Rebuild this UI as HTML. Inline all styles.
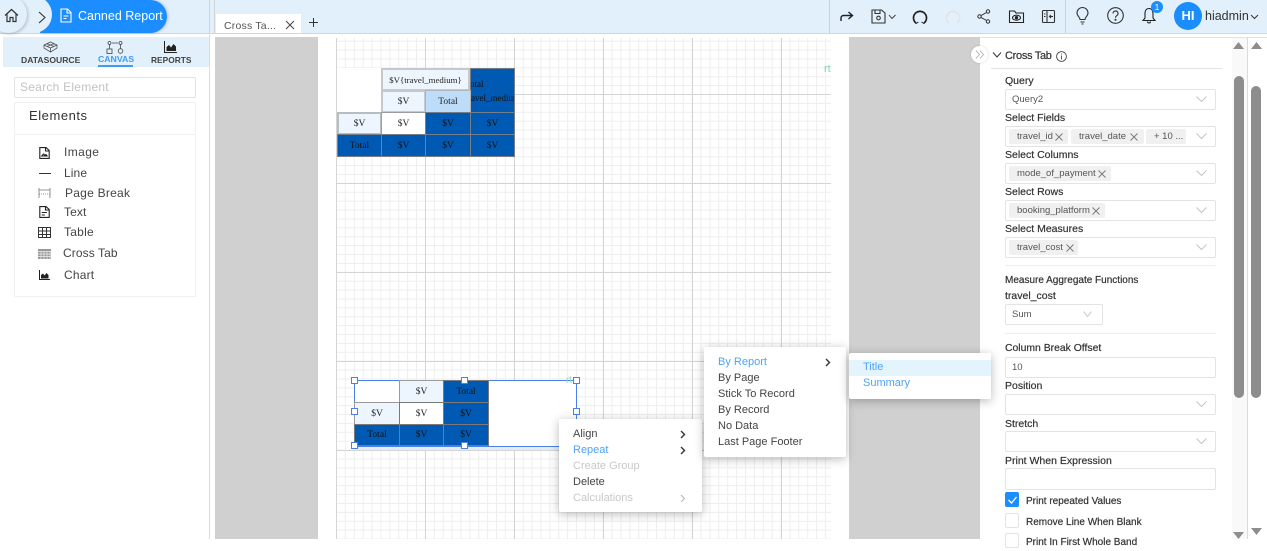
<!DOCTYPE html>
<html><head><meta charset="utf-8">
<style>
html,body{margin:0;padding:0;width:1267px;height:539px;overflow:hidden;background:#fff;font-family:"Liberation Sans",sans-serif;color:#333}
.a{position:absolute}
.t{position:absolute;white-space:nowrap;line-height:16px;font-size:11px;color:#3a3a3a}
.b{position:absolute;box-sizing:border-box;background:#fff;border:1px solid #e3e3e3;border-radius:2px}
.l{font-size:10.5px;color:#333;font-weight:400;-webkit-text-stroke:.2px #333;margin-top:1px}
.n{margin-top:1px}
.c{position:absolute;box-sizing:border-box;border:1px solid #8a8a8a;font-family:"Liberation Serif",serif;font-size:9.5px;color:#222;display:flex;align-items:center;justify-content:center;overflow:hidden;white-space:nowrap}
.d{background:#0059b2;color:#111}
.p{background:#edf6fe}
.chip{position:absolute;height:15px;background:#f0f0f0;border-radius:2px;font-size:9.5px;line-height:15px;color:#555;box-sizing:border-box;padding-left:8px;white-space:nowrap}
.m{position:absolute;background:#fff;box-shadow:0 2px 10px rgba(0,0,0,.28);border-radius:2px}
.h{position:absolute;width:5px;height:5px;background:#fff;border:1px solid #4a80e8}
svg{position:absolute;overflow:visible}
.blue{color:#3f9cf5}
.arrow{fill:none;stroke:#c4c4c4;stroke-width:1}
</style></head><body>

<!-- top bar -->
<div class="a" style="left:0;top:0;width:1267px;height:33px;background:#e1f0fa;border-bottom:1px solid #d0d6da"></div>
<div class="a" style="left:209px;top:0;width:6px;height:33px;background:#e1f0fa;border-left:1px solid #cfd6da;border-right:1px solid #cfd6da;box-sizing:border-box"></div>
<div class="a" style="left:40px;top:0;width:127px;height:33px;background:#1b8dff;border-radius:0 17px 17px 0;box-shadow:1px 0 3px rgba(0,0,0,.2)"></div>
<div class="a" style="left:16px;top:-4px;width:36px;height:37px;background:#e1f0fa;border-radius:0 20px 20px 0"></div>
<div class="a" style="left:-10px;top:-4px;width:37px;height:37px;background:#e1f0fa;border-radius:50%;box-shadow:1px 1px 3px rgba(0,0,0,.22)"></div>
<svg style="left:4px;top:8px" width="15" height="15" viewBox="0 0 15 15" fill="none" stroke="#333" stroke-width="1.2"><path d="M1 7.500 7.500 1.500 14 7.500M3 6v7.500h3V9.500h3v4h3V6"/></svg>
<svg style="left:38px;top:11px" width="9" height="13" viewBox="0 0 9 13" fill="none" stroke="#333" stroke-width="1.1"><path d="M1 1l6 5.500-6 5.500"/></svg>
<svg style="left:60px;top:8px" width="12" height="15" viewBox="0 0 12 15" fill="none" stroke="#fff" stroke-width="1.1"><path d="M1 1h6.500L11 4.500V14H1zM7 1v4h4M3.500 8h5M3.500 10.500h3"/></svg>
<div class="t" style="left:78px;top:8px;color:#fff;font-size:12.5px">Canned Report</div>

<div class="a" style="left:216px;top:14px;width:85px;height:19px;background:#fff"></div>
<div class="t" style="left:224px;top:18px;font-size:10.5px;color:#555;letter-spacing:.2px">Cross Ta...</div>
<svg style="left:285px;top:20px" width="10" height="10" viewBox="0 0 10 10" stroke="#444" stroke-width="1"><path d="M1 1l8 8M9 1l-8 8"/></svg>
<svg style="left:309px;top:18px" width="9" height="9" viewBox="0 0 9 9" stroke="#333" stroke-width="1"><path d="M4.500 0v9M0 4.500h9"/></svg>

<div class="a" style="left:829px;top:0;width:1px;height:33px;background:#c9d2d8"></div>
<div class="a" style="left:1065px;top:0;width:1px;height:33px;background:#c9d2d8"></div>
<svg style="left:840px;top:11px" width="14" height="11" viewBox="0 0 14 11" fill="none" stroke="#222" stroke-width="1.400"><path d="M1 10V7c0-1.500 1-2.500 2.500-2.500H12M8.500 1 12.500 4.500 8.500 8"/></svg>
<svg style="left:871px;top:9px" width="26" height="15" viewBox="0 0 26 15" fill="none" stroke="#333" stroke-width="1.100"><path d="M1 1h9.500L14 4v10H1zM4 1v3.500h5V1"/><circle cx="7.500" cy="9" r="1.800"/><path d="M18 6l3 3.500L24.500 6" stroke-width=".9"/></svg>
<svg style="left:912px;top:9px" width="16" height="16" viewBox="0 0 16 16" fill="none" stroke="#222" stroke-width="1.700"><path d="M4 14A6.500 6.500 0 1 1 12 14"/><path d="M2 12l2 2.500L6.500 13M14 12l-2 2.500L9.500 13" stroke-width="1"/></svg>
<svg style="left:945px;top:9px" width="16" height="16" viewBox="0 0 16 16" fill="none" stroke="#dfe5e8" stroke-width="1.700"><path d="M4 14A6.500 6.500 0 1 1 12 14"/></svg>
<svg style="left:977px;top:9px" width="14" height="15" viewBox="0 0 14 15" fill="none" stroke="#333" stroke-width="1"><circle cx="11" cy="2.500" r="1.700"/><circle cx="2.500" cy="7.500" r="1.700"/><circle cx="11" cy="12.500" r="1.700"/><path d="M4 6.600 9.500 3.500M4 8.400l5.500 3.100"/></svg>
<svg style="left:1009px;top:10px" width="15" height="13" viewBox="0 0 15 13" fill="none" stroke="#222" stroke-width="1.100"><path d="M.5 12.500V1h5l1.500 2h7.500v9.500z"/><ellipse cx="7.500" cy="7.700" rx="4" ry="2.500"/><circle cx="7.500" cy="7.700" r="1.100" fill="#222"/></svg>
<svg style="left:1042px;top:10px" width="13" height="13" viewBox="0 0 13 13" fill="none" stroke="#333" stroke-width="1.100"><rect x=".5" y=".5" width="12" height="12" rx="1"/><path d="M5 .5v12M2 4h1.500M2 6.500h1.500M11 6.500H7.500M9 5 7.500 6.500 9 8"/></svg>
<svg style="left:1076px;top:7px" width="13" height="18" viewBox="0 0 13 18" fill="none" stroke="#333" stroke-width="1.100"><path d="M4 12.500C4 10 1 9 1 6a5.500 5.500 0 0 1 11 0c0 3-3 4-3 6.500zM4.500 15h4M5.500 17h2"/></svg>
<svg style="left:1107px;top:7px" width="17" height="17" viewBox="0 0 17 17" fill="none" stroke="#333" stroke-width="1.100"><circle cx="8.500" cy="8.500" r="7.800"/><path d="M6 6.500a2.500 2.500 0 1 1 3.700 2.200c-.8.500-1.200 1-1.200 2"/><circle cx="8.500" cy="12.800" r=".5" fill="#333"/></svg>
<svg style="left:1142px;top:7px" width="14" height="17" viewBox="0 0 14 17" fill="none" stroke="#222" stroke-width="1.100"><path d="M7 1.500C4 1.500 3 4 3 6.500V11L1 13.500h12L11 11V6.500C11 4 10 1.500 7 1.500zM5.500 14.500c0 2 3 2 3 0"/></svg>
<div class="a" style="left:1151px;top:1px;width:12px;height:12px;background:#1b8dff;border-radius:50%;color:#fff;font-size:8.500px;line-height:12px;text-align:center">1</div>
<div class="a" style="left:1174px;top:2px;width:28px;height:28px;background:#1b8dff;border-radius:50%;color:#fff;font-size:13px;font-weight:700;line-height:28px;text-align:center">HI</div>
<div class="t" style="left:1205px;top:8px;font-size:12.500px;color:#333">hiadmin</div>
<svg style="left:1250px;top:14px" width="9" height="6" viewBox="0 0 9 6" fill="none" stroke="#333" stroke-width="1"><path d="M1 1l3.500 3.500L8 1"/></svg>

<!-- left sidebar -->
<div class="a" style="left:209px;top:33px;width:1px;height:506px;background:#dcdcdc"></div>
<div class="a" style="left:3px;top:37px;width:206px;height:30px;background:#e1f0fa"></div>
<svg style="left:43px;top:41px" width="15" height="12" viewBox="0 0 15 12" fill="none" stroke="#555" stroke-width=".8"><path d="M1 4 7.500 1 14 4v3L7.500 11 1 7zM1 4l6.500 3L14 4M7.500 7v4M4 2.500 11 5.500M11 2.500 4 5.500"/></svg>
<svg style="left:106px;top:41px" width="18" height="13" viewBox="0 0 18 13" fill="none" stroke="#444" stroke-width=".8"><circle cx="3.500" cy="2" r="1.500"/><circle cx="14.500" cy="2" r="1.500"/><rect x="1" y="8" width="5" height="4.500"/><circle cx="14.500" cy="10" r="2.300"/><path d="M3.500 3.500V8M14.500 3.500V8M6 2h6"/></svg>
<svg style="left:164px;top:41px" width="13" height="12" viewBox="0 0 13 12"><path d="M.5 0v11.500H13" fill="none" stroke="#222"/><path d="M2.500 10V6l2.500-2 2 2.500L9.500 3 12 5.500V10z" fill="#222"/></svg>
<div class="t" style="left:21px;top:52px;font-size:8.600px;font-weight:700;color:#444">DATASOURCE</div>
<div class="t" style="left:98px;top:51px;font-size:8.700px;font-weight:700;color:#3f9cf5">CANVAS</div>
<div class="a" style="left:98px;top:65px;width:35px;height:2px;background:#3f9cf5"></div>
<div class="t" style="left:151px;top:52px;font-size:8.400px;font-weight:700;color:#444">REPORTS</div>

<div class="b" style="left:14px;top:77px;width:182px;height:21px"></div>
<div class="t" style="left:20px;top:79px;font-size:12px;color:#c2c2c2;letter-spacing:.25px">Search Element</div>
<div class="b" style="left:14px;top:102px;width:182px;height:195px;border-color:#f0f0f0"></div>
<div class="a" style="left:15px;top:134px;width:180px;height:1px;background:#f0f0f0"></div>
<div class="t" style="left:29px;top:108px;font-size:13px;color:#333;letter-spacing:.55px">Elements</div>

<svg style="left:39px;top:147px" width="11" height="12" viewBox="0 0 11 12" fill="none" stroke="#222" stroke-width="1.100"><path d="M.8.600H7L10.200 3.500V11.400H.8zM6.500.600V4h3.700M2.800 9l1.600-2 1.500 1.300 1-.8 1.200 1.500z"/></svg>
<div class="t" style="left:64px;top:144px;font-size:12px;color:#444;letter-spacing:.4px">Image</div>
<div class="a" style="left:39px;top:173px;width:12px;height:1px;background:#333"></div>
<div class="t" style="left:64px;top:165px;font-size:12px;color:#444;letter-spacing:.1px">Line</div>
<svg style="left:38px;top:187px" width="13" height="12" viewBox="0 0 13 12" fill="none" stroke="#777" stroke-width=".8"><path d="M1 1v10M12 1v10M1 3h11"/><path d="M1 7h11" stroke-dasharray="1 1"/></svg>
<div class="t" style="left:65px;top:185px;font-size:12px;color:#444;letter-spacing:.25px">Page Break</div>
<svg style="left:39px;top:206px" width="11" height="12" viewBox="0 0 11 12" fill="none" stroke="#222" stroke-width="1.100"><path d="M.8.600H7L10.200 3.500V11.400H.8zM6.500.600V4h3.700M2.800 6.500h5M2.800 9h3"/></svg>
<div class="t" style="left:64px;top:204px;font-size:12px;color:#444;letter-spacing:.1px">Text</div>
<svg style="left:38px;top:227px" width="13" height="11" viewBox="0 0 13 11" fill="none" stroke="#333" stroke-width="1"><rect x=".5" y=".5" width="12" height="10"/><path d="M4.500.5v10M8.500.5v10M.5 4h12M.5 7.500h12"/></svg>
<div class="t" style="left:64px;top:224px;font-size:12px;color:#444;letter-spacing:.25px">Table</div>
<svg style="left:38px;top:249px" width="13" height="10" viewBox="0 0 13 10"><rect width="13" height="10" fill="#999"/><path d="M0 2.500h13M3 2.500V10M6 2.500V10M9 2.500V10M12 2.500V10M0 5h13M0 7.500h13" stroke="#eee" stroke-width=".7" fill="none"/></svg>
<div class="t" style="left:63px;top:245px;font-size:12px;color:#444;letter-spacing:.1px">Cross Tab</div>
<svg style="left:39px;top:270px" width="11" height="10" viewBox="0 0 11 10"><path d="M.5 0v9.500H11" fill="none" stroke="#222"/><path d="M2 8.500V5l2-1.500 1.500 2L7.500 3l2 2v3.500z" fill="#222"/></svg>
<div class="t" style="left:64px;top:267px;font-size:12px;color:#444;letter-spacing:.2px">Chart</div>

<!-- canvas area -->
<div class="a" style="left:215px;top:37px;width:765px;height:502px;background:#d0d0d0"></div>
<div class="a" style="left:318px;top:37px;width:531px;height:502px;background:#fff"></div>
<div class="a" style="left:336px;top:38px;width:495px;height:501px;
background-image:linear-gradient(#d4d4d4 1px,transparent 1px),linear-gradient(90deg,#d4d4d4 1px,transparent 1px),linear-gradient(#eeeeee 1px,transparent 1px),linear-gradient(90deg,#eeeeee 1px,transparent 1px);
background-size:89px 89px,89px 89px,8.900px 8.900px,8.900px 8.900px;background-position:0 56px,0 0,0 56px,0 0"></div>
<div class="t" style="left:824px;top:61px;font-size:11px;color:#7fd6b4">rt</div>

<!-- table 1 -->
<div class="a" style="left:337px;top:68px;width:44px;height:44px;background:#fff"></div>
<div class="c p" style="left:381px;top:68px;width:89px;height:23px;border-color:#c5c9cd;border-width:2px;font-size:8.800px">$V{travel_medium}</div>
<div class="c d" style="left:470px;top:68px;width:45px;height:45px;border-color:#767f88;display:block;line-height:14px;padding-top:8px"><span style="margin-left:-1px;display:block;white-space:nowrap;font-size:9px">otal</span><span style="display:block;margin-left:-3px;white-space:nowrap;font-size:9px">ravel_mediur</span></div>
<div class="c p" style="left:381px;top:90px;width:45px;height:23px;border-color:#c5c9cd;border-width:2px">$V</div>
<div class="c" style="left:425px;top:90px;width:46px;height:23px;background:#bcdcfa;border-color:#b0b4b8;border-width:1px">Total</div>
<div class="c p" style="left:337px;top:112px;width:45px;height:23px;border-color:#b9bdc0;border-width:2px">$V</div>
<div class="c" style="left:381px;top:112px;width:45px;height:23px;background:#fff;border-color:#9a9ea2;border-width:1.500px">$V</div>
<div class="c d" style="left:425px;top:112px;width:46px;height:23px;border-width:1.500px;border-color:#767f88">$V</div>
<div class="c d" style="left:470px;top:112px;width:45px;height:23px;border-width:1.500px;border-color:#767f88">$V</div>
<div class="c d" style="left:337px;top:134px;width:45px;height:23px;border-width:1px;border-color:#767f88">Total</div>
<div class="c d" style="left:381px;top:134px;width:45px;height:23px;border-width:1px;border-color:#767f88">$V</div>
<div class="c d" style="left:425px;top:134px;width:46px;height:23px;border-width:1px;border-color:#767f88">$V</div>
<div class="c d" style="left:470px;top:134px;width:45px;height:23px;border-width:1px;border-color:#767f88">$V</div>

<!-- table 2 (selected) -->
<div class="a" style="left:354px;top:380px;width:223px;height:67px;background:#fff;box-sizing:border-box;border:1.500px solid #4a80e8;box-shadow:0 3px 0 #e4ecf9"></div>
<div class="t" style="left:566px;top:373px;font-size:10px;color:#8fdcc0">rt</div>
<div class="c p" style="left:399px;top:380px;width:45px;height:23px;border-color:#9a9a9a">$V</div>
<div class="c d" style="left:443px;top:380px;width:46px;height:23px;border-color:#7a7a7a">Total</div>
<div class="c p" style="left:354px;top:402px;width:46px;height:23px;border-color:#9a9a9a">$V</div>
<div class="c" style="left:399px;top:402px;width:45px;height:23px;background:#fff;border-color:#7a7a7a">$V</div>
<div class="c d" style="left:443px;top:402px;width:46px;height:23px;border-color:#7a7a7a">$V</div>
<div class="c d" style="left:354px;top:424px;width:46px;height:22px;border-color:#7a7a7a">Total</div>
<div class="c d" style="left:399px;top:424px;width:45px;height:22px;border-color:#7a7a7a">$V</div>
<div class="c d" style="left:443px;top:424px;width:46px;height:22px;border-color:#7a7a7a">$V</div>
<div class="h" style="left:351px;top:377px"></div>
<div class="h" style="left:461px;top:377px"></div>
<div class="h" style="left:573px;top:377px"></div>
<div class="h" style="left:351px;top:408px"></div>
<div class="h" style="left:573px;top:408px"></div>
<div class="h" style="left:351px;top:442px"></div>
<div class="h" style="left:461px;top:442px"></div>

<!-- context menus -->
<div class="m" style="left:559px;top:419px;width:143px;height:93px"></div>
<div class="t n" style="left:573px;top:425px;font-size:11px;color:#444">Align</div>
<div class="t n" style="left:573px;top:441px;font-size:11px;color:#4da3f5">Repeat</div>
<div class="t n" style="left:573px;top:457px;font-size:11px;color:#c8c8c8">Create Group</div>
<div class="t n" style="left:573px;top:473px;font-size:11px;color:#444">Delete</div>
<div class="t n" style="left:573px;top:489px;font-size:11px;color:#c8c8c8">Calculations</div>
<svg style="left:680px;top:430px" width="6" height="9" viewBox="0 0 6 9" fill="none" stroke="#333" stroke-width="1.400"><path d="M1 1l3.500 3.500L1 8"/></svg>
<svg style="left:680px;top:446px" width="6" height="9" viewBox="0 0 6 9" fill="none" stroke="#333" stroke-width="1.400"><path d="M1 1l3.500 3.500L1 8"/></svg>
<svg style="left:680px;top:494px" width="6" height="9" viewBox="0 0 6 9" fill="none" stroke="#bbb" stroke-width="1.200"><path d="M1 1l3.500 3.500L1 8"/></svg>

<div class="m" style="left:704px;top:347px;width:142px;height:110px"></div>
<div class="t n" style="left:718px;top:353px;font-size:11px;color:#4da3f5">By Report</div>
<div class="t n" style="left:718px;top:369px;font-size:11px;color:#444">By Page</div>
<div class="t n" style="left:718px;top:385px;font-size:11px;color:#444">Stick To Record</div>
<div class="t n" style="left:718px;top:401px;font-size:11px;color:#444">By Record</div>
<div class="t n" style="left:718px;top:417px;font-size:11px;color:#444">No Data</div>
<div class="t n" style="left:718px;top:433px;font-size:11px;color:#444">Last Page Footer</div>
<svg style="left:825px;top:358px" width="6" height="9" viewBox="0 0 6 9" fill="none" stroke="#333" stroke-width="1.400"><path d="M1 1l3.500 3.500L1 8"/></svg>

<!-- right panel -->
<div class="a" style="left:980px;top:37px;width:287px;height:502px;background:#fff;border-top:1px solid #e2e2e2;box-sizing:border-box"></div>
<div class="a" style="left:1232px;top:38px;width:15px;height:501px;background:#f9f9f9"></div>
<div class="a" style="left:1247px;top:37px;width:1px;height:502px;background:#dcdcdc"></div>
<div class="a" style="left:971px;top:46px;width:17px;height:17px;background:#fff;border-radius:50%;box-shadow:0 0 2px rgba(0,0,0,.18)"></div>
<svg style="left:975px;top:50px" width="10" height="9" viewBox="0 0 10 9" fill="none" stroke="#aaa" stroke-width=".8"><path d="M1 .5l3.500 4L1 8.500M5 .5l3.500 4L5 8.500"/></svg>
<svg style="left:992px;top:52px" width="10" height="6" viewBox="0 0 10 6" fill="none" stroke="#333" stroke-width="1"><path d="M1 .5l4 4.500L9 .5"/></svg>
<div class="t" style="left:1005px;top:48px;font-size:11px;color:#333;-webkit-text-stroke:.2px #333;letter-spacing:-.3px">Cross Tab</div>
<svg style="left:1056px;top:51px" width="11" height="11" viewBox="0 0 11 11" fill="none" stroke="#333" stroke-width=".8"><circle cx="5.500" cy="5.500" r="4.900"/><path d="M5.500 4.500v4M5.500 2.500v1"/></svg>
<div class="a" style="left:991px;top:68px;width:231px;height:1px;background:#e2e2e2"></div>

<div class="t l" style="left:1005px;top:72px">Query</div>
<div class="b" style="left:1005px;top:89px;width:211px;height:21px"></div>
<div class="t n" style="left:1012px;top:91px;font-size:9.500px;color:#555">Query2</div>
<svg class="arrow" style="left:1196px;top:96px" width="11" height="6" viewBox="0 0 11 6"><path d="M.5.500l5 5 5-5"/></svg>

<div class="t l" style="left:1005px;top:109px">Select Fields</div>
<div class="b" style="left:1005px;top:126px;width:211px;height:21px"></div>
<div class="chip" style="left:1009px;top:129px;width:59px">travel_id</div>
<div class="chip" style="left:1071px;top:129px;width:73px">travel_date</div>
<div class="chip" style="left:1146px;top:129px;width:40px">+ 10 ...</div>
<svg style="left:1055px;top:133px" width="8" height="8" viewBox="0 0 8 8" stroke="#777" stroke-width=".9"><path d="M.5.500l7 7M7.500.500l-7 7"/></svg>
<svg style="left:1130px;top:133px" width="8" height="8" viewBox="0 0 8 8" stroke="#777" stroke-width=".9"><path d="M.5.500l7 7M7.500.500l-7 7"/></svg>
<svg class="arrow" style="left:1196px;top:133px" width="11" height="6" viewBox="0 0 11 6"><path d="M.5.500l5 5 5-5"/></svg>

<div class="t l" style="left:1005px;top:146px">Select Columns</div>
<div class="b" style="left:1005px;top:163px;width:211px;height:21px"></div>
<div class="chip" style="left:1009px;top:166px;width:102px">mode_of_payment</div>
<svg style="left:1098px;top:170px" width="8" height="8" viewBox="0 0 8 8" stroke="#777" stroke-width=".9"><path d="M.5.500l7 7M7.500.500l-7 7"/></svg>
<svg class="arrow" style="left:1196px;top:170px" width="11" height="6" viewBox="0 0 11 6"><path d="M.5.500l5 5 5-5"/></svg>

<div class="t l" style="left:1005px;top:183px">Select Rows</div>
<div class="b" style="left:1005px;top:200px;width:211px;height:21px"></div>
<div class="chip" style="left:1009px;top:203px;width:96px">booking_platform</div>
<svg style="left:1092px;top:207px" width="8" height="8" viewBox="0 0 8 8" stroke="#777" stroke-width=".9"><path d="M.5.500l7 7M7.500.500l-7 7"/></svg>
<svg class="arrow" style="left:1196px;top:207px" width="11" height="6" viewBox="0 0 11 6"><path d="M.5.500l5 5 5-5"/></svg>

<div class="t l" style="left:1005px;top:220px">Select Measures</div>
<div class="b" style="left:1005px;top:237px;width:211px;height:21px"></div>
<div class="chip" style="left:1009px;top:240px;width:69px">travel_cost</div>
<svg style="left:1066px;top:244px" width="8" height="8" viewBox="0 0 8 8" stroke="#777" stroke-width=".9"><path d="M.5.500l7 7M7.500.500l-7 7"/></svg>
<svg class="arrow" style="left:1196px;top:244px" width="11" height="6" viewBox="0 0 11 6"><path d="M.5.500l5 5 5-5"/></svg>

<div class="a" style="left:1005px;top:265px;width:211px;height:1px;background:#eee"></div>
<div class="t l" style="left:1005px;top:272px;font-size:10px">Measure Aggregate Functions</div>
<div class="t l" style="left:1005px;top:287px">travel_cost</div>
<div class="b" style="left:1005px;top:304px;width:98px;height:21px"></div>
<div class="t n" style="left:1012px;top:306px;font-size:9.500px;color:#555">Sum</div>
<svg class="arrow" style="left:1083px;top:311px" width="9" height="6" viewBox="0 0 9 6"><path d="M.5.500l4 5 4-5"/></svg>
<div class="a" style="left:1005px;top:333px;width:211px;height:1px;background:#eee"></div>

<div class="t l" style="left:1005px;top:340px;font-size:10.400px">Column Break Offset</div>
<div class="b" style="left:1005px;top:357px;width:211px;height:21px"></div>
<div class="t n" style="left:1012px;top:359px;font-size:9.500px;color:#555">10</div>
<div class="t l" style="left:1005px;top:377px">Position</div>
<div class="b" style="left:1005px;top:394px;width:211px;height:21px"></div>
<svg class="arrow" style="left:1196px;top:401px" width="11" height="6" viewBox="0 0 11 6"><path d="M.5.500l5 5 5-5"/></svg>
<div class="t l" style="left:1005px;top:415px">Stretch</div>
<div class="b" style="left:1005px;top:431px;width:211px;height:21px"></div>
<svg class="arrow" style="left:1196px;top:438px" width="11" height="6" viewBox="0 0 11 6"><path d="M.5.500l5 5 5-5"/></svg>
<div class="t l" style="left:1005px;top:452px">Print When Expression</div>
<div class="b" style="left:1005px;top:468px;width:211px;height:22px"></div>
<div class="a" style="left:1005px;top:492px;width:14px;height:15px;background:#1b8dff;border-radius:2px"></div>
<svg style="left:1008px;top:496px" width="9" height="8" viewBox="0 0 9 8" fill="none" stroke="#fff" stroke-width="1.300"><path d="M.5 4l3 3L8.500 1"/></svg>
<div class="t l" style="left:1026px;top:493px;font-size:10px">Print repeated Values</div>
<div class="b" style="left:1005px;top:513px;width:14px;height:15px"></div>
<div class="t l" style="left:1026px;top:514px;font-size:10px">Remove Line When Blank</div>
<div class="b" style="left:1005px;top:533px;width:14px;height:15px"></div>
<div class="t l" style="left:1026px;top:534px;font-size:10px">Print In First Whole Band</div>

<!-- submenu over panel -->
<div class="m" style="left:849px;top:353px;width:142px;height:46px"></div>
<div class="a" style="left:849px;top:360px;width:142px;height:16px;background:#e3f4fd"></div>
<div class="t" style="left:863px;top:359px;font-size:11px;color:#4da3f5">Title</div>
<div class="t" style="left:863px;top:375px;font-size:11px;color:#4da3f5">Summary</div>

<!-- scrollbars -->
<div class="a" style="left:1234px;top:76px;width:9.500px;height:322px;background:#8d8d8d;border-radius:5px"></div>
<div class="a" style="left:1251px;top:86px;width:9.500px;height:312px;background:#8d8d8d;border-radius:5px"></div>
<svg style="left:1232px;top:41px" width="13" height="9" viewBox="0 0 13 9"><path d="M6.500 1 12 8H1z" fill="#8d8d8d"/></svg>
<svg style="left:1250px;top:41px" width="13" height="9" viewBox="0 0 13 9"><path d="M6.500 1 12 8H1z" fill="#8d8d8d"/></svg>
<svg style="left:1232px;top:531px" width="13" height="9" viewBox="0 0 13 9"><path d="M6.500 8 12 1H1z" fill="#8d8d8d"/></svg>
<svg style="left:1250px;top:527px" width="13" height="9" viewBox="0 0 13 9"><path d="M6.500 8 12 1H1z" fill="#8d8d8d"/></svg>
</body></html>
